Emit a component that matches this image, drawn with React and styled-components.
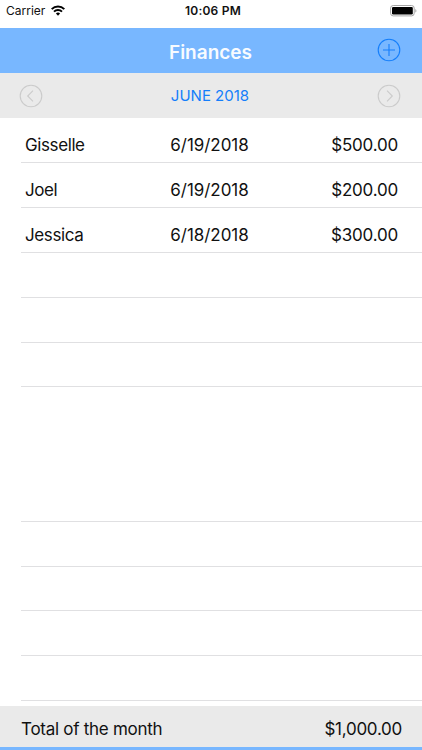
import React from 'react'
import styled, { createGlobalStyle } from 'styled-components'

const GlobalStyle = createGlobalStyle`
  * {
    box-sizing: border-box;
  }

  body {
    margin: 0;
    background-color: #ffffff;
    font-family: 'Inter', 'Liberation Sans', sans-serif;
    color: #111111;
  }
`;

const Screen = styled.main`
  display: flex;
  flex-direction: column;
  width: 422px;
  height: 750px;
  overflow: hidden;
  background-color: #ffffff;
`;

const StatusBar = styled.div`
  display: grid;
  grid-template-columns: 1fr auto 1fr;
  align-items: center;
  height: 28.3px;
  padding: 0 4px 6px 6px;
  font-size: 12px;
  line-height: 22px;
`;

const Carrier = styled.div`
  display: flex;
  align-items: center;
  gap: 6px;
`;

const Clock = styled.span`
  padding-left: 2px;
  font-weight: 600;
  letter-spacing: 0.2px;
`;

const BatterySlot = styled.div`
  display: flex;
  justify-content: flex-end;
`;

const NavBar = styled.header`
  display: grid;
  grid-template-columns: 24px 1fr 24px;
  align-items: center;
  height: 45.2px;
  padding: 0 21px 0 20px;
  background-color: #78b7ff;
`;

const Title = styled.h1`
  grid-column: 2;
  margin: 0;
  padding-top: 4px;
  text-align: center;
  font-size: 19px;
  font-weight: 600;
  line-height: 24px;
  color: #f7fbff;
`;

const IconButton = styled.button`
  display: flex;
  width: 24px;
  height: 24px;
  padding: 0;
  border: 0;
  background: none;
  color: ${(props) => props.$color};
`;

const AddButton = styled(IconButton)`
  margin-bottom: 2px;
`;

const MonthBar = styled.div`
  display: grid;
  grid-template-columns: 24px 1fr 24px;
  align-items: center;
  height: 45px;
  padding: 0 21px 0 19px;
  background-color: #eaeaea;
`;

const Month = styled.span`
  text-align: center;
  font-size: 15px;
  line-height: 20px;
  color: #147efb;
`;

const List = styled.ul`
  flex: 1;
  margin: 0;
  padding: 0 0 0 21px;
  list-style: none;
  overflow: hidden;
`;

const Row = styled.li`
  display: grid;
  grid-template-columns: 1fr 80px 1fr;
  align-items: center;
  height: 44.82px;
  padding: 9.4px 24px 0 4px;
  border-bottom: 1px solid ${(props) => (props.$plain ? 'transparent' : '#e0e0e2')};
  font-size: 17px;
  line-height: 22px;
`;

const Name = styled.span`
  letter-spacing: -0.4px;
`;

const PaidOn = styled.span`
  margin-left: -4px;
  text-align: center;
  white-space: nowrap;
  letter-spacing: -0.05px;
`;

const Amount = styled.span`
  text-align: right;
  letter-spacing: -0.2px;
`;

const TotalBar = styled.footer`
  display: flex;
  align-items: center;
  justify-content: space-between;
  height: 44px;
  padding: 4px 20px 0 21px;
  border-bottom: 3px solid #78b7ff;
  background-color: #eaeaea;
  font-size: 17px;
  line-height: 22px;
  letter-spacing: -0.27px;
`;

const WifiIcon = () => (
  <svg width="14" height="12" viewBox="0 0 14 12" fill="none" stroke="#000000" strokeWidth="2">
    <path d="M.7 4.1a9 9 0 0 1 12.6 0" />
    <path d="M3 6.6a5.7 5.7 0 0 1 8 0" />
    <path d="M7 10.8 4.9 8.6a3 3 0 0 1 4.2 0z" fill="#000000" stroke="none" />
  </svg>
);

const BatteryIcon = () => (
  <svg width="28" height="12" viewBox="0 0 28 12">
    <rect x=".6" y=".5" width="23.6" height="10.4" rx="2.6" fill="none" stroke="#a5a5a5" />
    <rect x="2" y="1.9" width="20.8" height="7.6" rx="1.2" fill="#000000" />
    <path d="M25.3 4c1.5.5 1.5 3.1 0 3.6z" fill="#a5a5a5" />
  </svg>
);

const CircleIcon = ({ d }) => (
  <svg width="24" height="24" viewBox="0 0 24 24" fill="none" stroke="currentColor" strokeWidth="1.1">
    <circle cx="12" cy="12" r="10.8" />
    <path d={d} />
  </svg>
);

const payments = [
  { name: 'Gisselle', date: '6/19/2018', amount: '$500.00' },
  { name: 'Joel', date: '6/19/2018', amount: '$200.00' },
  { name: 'Jessica', date: '6/18/2018', amount: '$300.00' },
];

// separators of the empty part of the list, the gap is where two of them are missing
const emptyRows = [true, true, true, false, false, true, true, true, true, true];

const App = () => {
  return (
    <>
      <GlobalStyle />
      <Screen>
        <StatusBar>
          <Carrier>
            Carrier
            <WifiIcon />
          </Carrier>
          <Clock>10:06 PM</Clock>
          <BatterySlot>
            <BatteryIcon />
          </BatterySlot>
        </StatusBar>
        <NavBar>
          <Title>Finances</Title>
          <AddButton $color="#147efb" aria-label="Add">
            <CircleIcon d="M12 6v12M6 12h12" />
          </AddButton>
        </NavBar>
        <MonthBar>
          <IconButton $color="#cbcbcb" aria-label="Previous month">
            <CircleIcon d="M14 6.7 8.7 12l5.3 5.3" />
          </IconButton>
          <Month>JUNE 2018</Month>
          <IconButton $color="#cbcbcb" aria-label="Next month">
            <CircleIcon d="M10 6.7l5.3 5.3-5.3 5.3" />
          </IconButton>
        </MonthBar>
        <List>
          {payments.map((payment) => (
            <Row key={payment.name}>
              <Name>{payment.name}</Name>
              <PaidOn>{payment.date}</PaidOn>
              <Amount>{payment.amount}</Amount>
            </Row>
          ))}
          {emptyRows.map((hasLine, index) => (
            <Row key={index} $plain={!hasLine} />
          ))}
        </List>
        <TotalBar>
          <span>Total of the month</span>
          <span>$1,000.00</span>
        </TotalBar>
      </Screen>
    </>
  )
}

export default App;
